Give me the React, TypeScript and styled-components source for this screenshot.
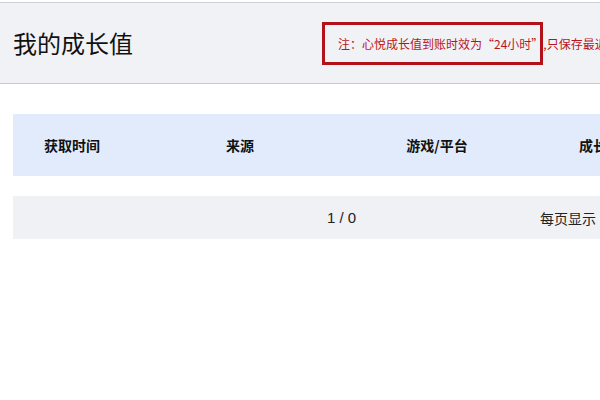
import React from 'react'
import styled, { createGlobalStyle } from 'styled-components'

const GlobalStyle = createGlobalStyle`
  html, body {
    margin: 0;
    padding: 0;
    background: #fff;
    overflow: hidden;
  }
  body {
    font-family: "Microsoft YaHei", "Noto Sans CJK SC", "Liberation Sans", sans-serif;
    color: #111;
  }
`

const Page = styled.div`
  width: 600px;
  height: 400px;
  padding-top: 2px;
  box-sizing: border-box;
  overflow: hidden;
`

const Header = styled.header`
  display: flex;
  align-items: center;
  height: 80px;
  padding-left: 13px;
  background: #f1f2f6;
  border-top: 1px solid #cfd0d4;
  border-bottom: 1px solid #c9cacd;
  white-space: nowrap;
`

const Title = styled.h1`
  margin: 0;
  font-size: 24px;
  font-weight: normal;
  line-height: 1;
  color: #111;
`

const Notice = styled.p`
  position: relative;
  margin: 0 0 0 205px;
  font-size: 12px;
  color: #b8161c;
`

const Highlight = styled.span`
  position: absolute;
  left: -16px;
  top: -13px;
  width: 215px;
  height: 37px;
  border: 3px solid #b3121a;
  pointer-events: none;
`

const Table = styled.section`
  margin: 30px 0 0 13px;
  width: 760px;
`

const HeadRow = styled.div`
  display: grid;
  grid-template-columns: 118px 218px 176px 150px 98px;
  align-items: center;
  height: 62px;
  background: #e1ebfb;
`

const HeadCell = styled.div`
  text-align: center;
  font-size: 14px;
  font-weight: bold;
  color: #111;
`

const Pager = styled.div`
  display: grid;
  grid-template-columns: 314px 213px auto;
  align-items: center;
  height: 43px;
  margin-top: 20px;
  background: #f0f1f4;
  font-size: 14px;
  color: #222;
`

const PageCount = styled.span`
  grid-column: 2;
  font-family: "Liberation Sans", "Noto Sans CJK SC", sans-serif;
  font-size: 15px;
`

const PageSize = styled.span`
  font-size: 14px;
`

const columns = ['获取时间', '来源', '游戏/平台', '成长值', '备注']

export default function App() {
  return (
    <Page>
      <GlobalStyle />
      <Header>
        <Title>我的成长值</Title>
        <Notice>
          注：心悦成长值到账时效为“24小时”,只保存最近三个月的记录
          <Highlight />
        </Notice>
      </Header>
      <Table>
        <HeadRow>
          {columns.map((c) => (
            <HeadCell key={c}>{c}</HeadCell>
          ))}
        </HeadRow>
        <Pager>
          <PageCount>1 / 0</PageCount>
          <PageSize>每页显示</PageSize>
        </Pager>
      </Table>
    </Page>
  )
}
